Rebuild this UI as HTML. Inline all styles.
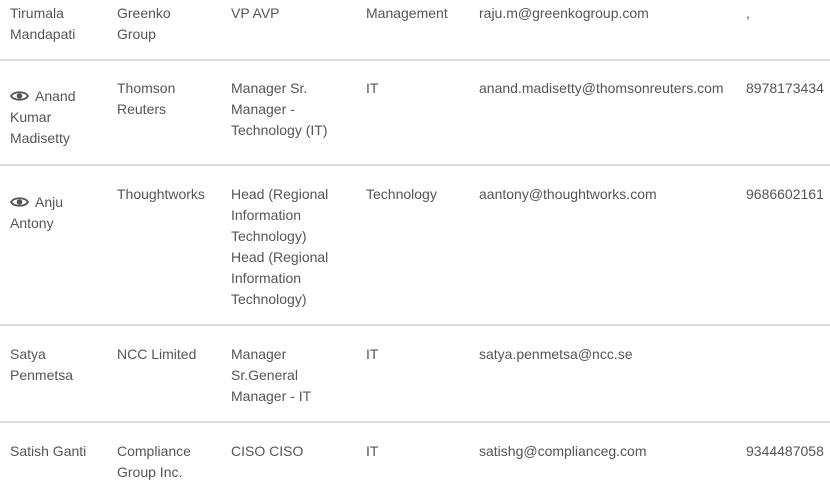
<!DOCTYPE html>
<html><head><meta charset="utf-8"><style>
html,body{margin:0;padding:0;background:#fff;width:830px;height:496px;overflow:hidden;position:relative}
body{font-family:"Liberation Sans",sans-serif;font-size:14px;line-height:21px;color:#555}
.c{position:absolute;white-space:nowrap}
.hr{position:absolute;left:0;width:830px;height:2px;background:#ddd}
.eye{display:inline-block;width:19px;height:12px;vertical-align:-1px;margin-right:6px}
</style></head><body>
<div class="hr" style="top:59px"></div>
<div class="hr" style="top:164px"></div>
<div class="hr" style="top:324px"></div>
<div class="hr" style="top:421px"></div>

<div class="c" style="left:10px;top:3px">Tirumala<br>Mandapati</div>
<div class="c" style="left:117px;top:3px">Greenko<br>Group</div>
<div class="c" style="left:231px;top:3px">VP AVP</div>
<div class="c" style="left:366px;top:3px">Management</div>
<div class="c" style="left:479px;top:3px">raju.m@greenkogroup.com</div>
<div class="c" style="left:746px;top:3px">,</div>

<div class="c" style="left:10px;top:86px"><svg class="eye" viewBox="0 0 19 12"><path d="M1 6C4 1 15 1 18 6C15 11 4 11 1 6Z" fill="none" stroke="#555" stroke-width="1.8"/><circle cx="9.5" cy="6" r="2.8" fill="#555"/></svg>Anand<br>Kumar<br>Madisetty</div>
<div class="c" style="left:117px;top:78px">Thomson<br>Reuters</div>
<div class="c" style="left:231px;top:78px">Manager Sr.<br>Manager -<br>Technology (IT)</div>
<div class="c" style="left:366px;top:78px">IT</div>
<div class="c" style="left:479px;top:78px">anand.madisetty@thomsonreuters.com</div>
<div class="c" style="left:746px;top:78px">8978173434</div>

<div class="c" style="left:10px;top:192px"><svg class="eye" viewBox="0 0 19 12"><path d="M1 6C4 1 15 1 18 6C15 11 4 11 1 6Z" fill="none" stroke="#555" stroke-width="1.8"/><circle cx="9.5" cy="6" r="2.8" fill="#555"/></svg>Anju<br>Antony</div>
<div class="c" style="left:117px;top:184px">Thoughtworks</div>
<div class="c" style="left:231px;top:184px">Head (Regional<br>Information<br>Technology)<br>Head (Regional<br>Information<br>Technology)</div>
<div class="c" style="left:366px;top:184px">Technology</div>
<div class="c" style="left:479px;top:184px">aantony@thoughtworks.com</div>
<div class="c" style="left:746px;top:184px">9686602161</div>

<div class="c" style="left:10px;top:344px">Satya<br>Penmetsa</div>
<div class="c" style="left:117px;top:344px">NCC Limited</div>
<div class="c" style="left:231px;top:344px">Manager<br>Sr.General<br>Manager - IT</div>
<div class="c" style="left:366px;top:344px">IT</div>
<div class="c" style="left:479px;top:344px">satya.penmetsa@ncc.se</div>

<div class="c" style="left:10px;top:441px">Satish Ganti</div>
<div class="c" style="left:117px;top:441px">Compliance<br>Group Inc.</div>
<div class="c" style="left:231px;top:441px">CISO CISO</div>
<div class="c" style="left:366px;top:441px">IT</div>
<div class="c" style="left:479px;top:441px">satishg@complianceg.com</div>
<div class="c" style="left:746px;top:441px">9344487058</div>
</body></html>
